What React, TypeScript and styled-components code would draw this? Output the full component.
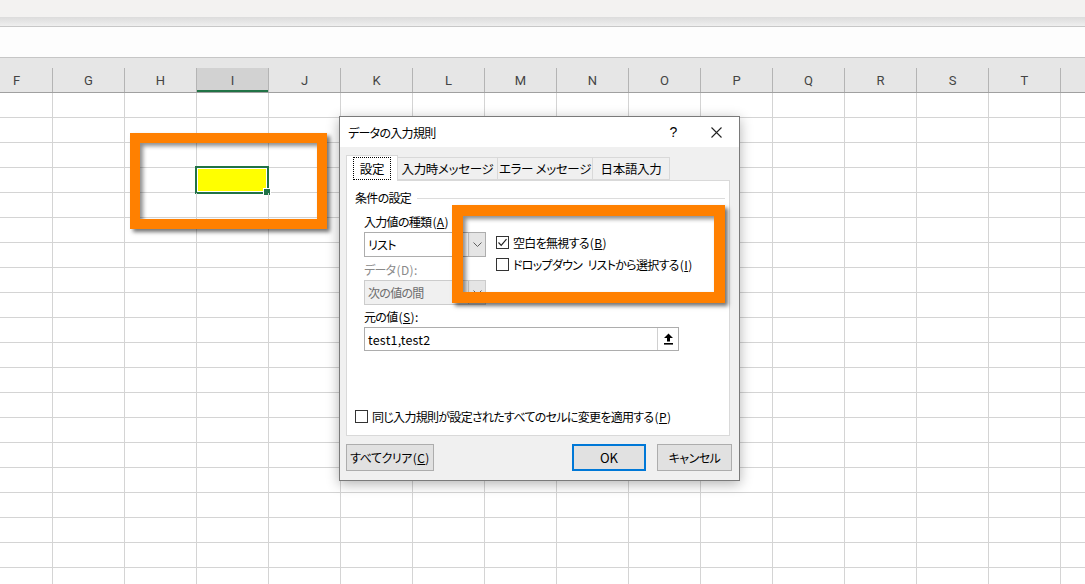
import styled, { createGlobalStyle } from "styled-components";

const GlobalStyle = createGlobalStyle`
  html, body {
    margin: 0;
    padding: 0;
    background: #ffffff;
  }
  * {
    box-sizing: border-box;
  }
`;

const COLUMNS = ["F", "G", "H", "I", "J", "K", "L", "M", "N", "O", "P", "Q", "R", "S", "T", "U"];
const ROW_COUNT = 20;

const Page = styled.div`
  position: relative;
  width: 1085px;
  height: 584px;
  overflow: hidden;
  background: #ffffff;
  font-family: "Noto Sans CJK JP", "Noto Sans", sans-serif;
`;

const TopBand = styled.div`
  height: 17px;
  background: #f3f2f1;
`;

const RibbonShadow = styled.div`
  height: 10px;
  background: linear-gradient(#dcdcdc, #efefef);
  border-bottom: 1px solid #c8c8c8;
`;

const FormulaBar = styled.div`
  height: 31px;
  background: #fdfdfd;
  border-bottom: 1px solid #c6c6c6;
`;

const HeaderRow = styled.div`
  display: flex;
  height: 35px;
  padding-top: 10px;
  margin-left: -19px;
  background: #e6e6e6;
  border-bottom: 1px solid #a0a0a0;
`;

const HeaderCell = styled.div<{ $active?: boolean }>`
  flex: 0 0 72px;
  height: 24px;
  display: flex;
  align-items: center;
  justify-content: center;
  border-right: 1px solid #b4b4b4;
  font-family: Roboto, "Liberation Sans", sans-serif;
  font-size: 13px;
  color: #444;
  background: ${(p) => (p.$active ? "#d2d2d2" : "transparent")};
  box-shadow: ${(p) => (p.$active ? "inset 0 -2px 0 #217346" : "none")};
`;

const SheetRow = styled.div`
  display: flex;
  height: 25px;
  margin-left: -19px;
  border-bottom: 1px solid #d4d4d4;
`;

const Cell = styled.div<{ $fill?: string }>`
  position: relative;
  flex: 0 0 72px;
  height: 24px;
  border-right: 1px solid #d4d4d4;
  background: ${(p) => p.$fill ?? "transparent"};
`;

const Selection = styled.div`
  position: absolute;
  left: -2px;
  top: -2px;
  right: -1px;
  bottom: -2px;
  border: 2px solid #217346;
  box-shadow: inset 0 0 0 1px #ffffff;

  &::after {
    content: "";
    position: absolute;
    right: -4px;
    bottom: -4px;
    width: 6px;
    height: 6px;
    background: #217346;
    border: 1px solid #ffffff;
  }
`;

const Highlight = styled.div<{ $x: number; $y: number; $w: number; $h: number; $t: number }>`
  position: absolute;
  left: ${(p) => p.$x}px;
  top: ${(p) => p.$y}px;
  width: ${(p) => p.$w}px;
  height: ${(p) => p.$h}px;
  border: ${(p) => p.$t}px solid #ff8000;
  box-shadow: 3px 3px 4px rgba(0, 0, 0, 0.55), inset 3px 3px 4px rgba(0, 0, 0, 0.45);
  z-index: 5;
`;

const Dialog = styled.div`
  position: absolute;
  left: 339px;
  top: 116px;
  width: 401px;
  height: 365px;
  display: flex;
  flex-direction: column;
  background: #f0f0f0;
  border: 1px solid #7a7a7a;
  box-shadow: 0 3px 12px rgba(0, 0, 0, 0.3);
  font-size: 12px;
  letter-spacing: -0.7px;
  color: #000;
  font-feature-settings: "palt";
  z-index: 3;
`;

const TitleBar = styled.div`
  display: flex;
  align-items: center;
  height: 30px;
  padding-left: 8px;
  background: #ffffff;
`;

const Title = styled.div`
  flex: 1;
`;

const TitleButton = styled.div<{ $w: number }>`
  width: ${(p) => p.$w}px;
  height: 30px;
  display: flex;
  align-items: center;
  justify-content: center;
  font-family: "Liberation Sans", sans-serif;
  font-size: 14px;
`;

const DialogBody = styled.div`
  flex: 1;
  display: flex;
  flex-direction: column;
  padding: 8px 9px 0 6px;
`;

const TabStrip = styled.div`
  display: flex;
  align-items: flex-end;
  height: 25px;
`;

const Tab = styled.div<{ $w: number; $active?: boolean }>`
  width: ${(p) => p.$w}px;
  height: ${(p) => (p.$active ? 26 : 23)}px;
  display: flex;
  align-items: center;
  justify-content: center;
  background: ${(p) => (p.$active ? "#ffffff" : "#f0f0f0")};
  border: 1px solid #d9d9d9;
  border-bottom: ${(p) => (p.$active ? "none" : "1px solid #d9d9d9")};
  border-left: ${(p) => (p.$active ? "1px solid #d9d9d9" : "none")};
  margin-bottom: ${(p) => (p.$active ? -1 : 0)}px;
  position: relative;
  z-index: ${(p) => (p.$active ? 1 : 0)};
  font-size: 12.5px;
  letter-spacing: -0.3px;
  white-space: pre;
`;

const FocusRing = styled.span`
  padding: 1px 6px;
  border: 1px dotted #000;
`;

const Panel = styled.div`
  height: 256px;
  display: flex;
  flex-direction: column;
  padding: 10px 4px 11px 8px;
  background: #ffffff;
  border: 1px solid #d9d9d9;
`;

const GroupHeader = styled.div`
  display: flex;
  align-items: center;
  gap: 6px;
  height: 14px;
  line-height: 14px;

  &::after {
    content: "";
    flex: 1;
    height: 1px;
    background: #dcdcdc;
  }
`;

const FormArea = styled.div`
  display: flex;
  margin: 9px 0 0 9px;
`;

const FieldColumn = styled.div`
  width: 122px;
  display: flex;
  flex-direction: column;
`;

const Label = styled.div<{ $disabled?: boolean; $gap: number }>`
  height: 16px;
  line-height: 16px;
  margin-top: ${(p) => p.$gap}px;
  color: ${(p) => (p.$disabled ? "#8a8a8a" : "#000")};
  white-space: nowrap;
`;

const KeyHint = styled.span`
  letter-spacing: 0.4px;
  margin-left: 1px;
`;

const Select = styled.div<{ $disabled?: boolean }>`
  display: flex;
  height: 25px;
  margin-top: 2px;
  border: 1px solid ${(p) => (p.$disabled ? "#cccccc" : "#adadad")};
  background: ${(p) => (p.$disabled ? "#f0f0f0" : "#ffffff")};
  color: ${(p) => (p.$disabled ? "#6d6d6d" : "#000")};
`;

const SelectValue = styled.div`
  flex: 1;
  display: flex;
  align-items: center;
  padding-left: 3px;
`;

const SelectArrow = styled.div`
  width: 17px;
  display: flex;
  align-items: center;
  justify-content: center;
  background: #e5e5e5;
  border-left: 1px solid #c4c4c4;
`;

const CheckColumn = styled.div`
  display: flex;
  flex-direction: column;
  gap: 6px;
  margin-left: 10px;
  padding-top: 20px;
`;

const CheckRow = styled.label`
  display: flex;
  align-items: center;
  gap: 4px;
  height: 16px;
  white-space: pre;
`;

const Box = styled.span`
  width: 13px;
  height: 13px;
  display: flex;
  align-items: center;
  justify-content: center;
  border: 1px solid #333333;
  background: #ffffff;
`;

const SourceBlock = styled.div`
  display: flex;
  flex-direction: column;
  margin-left: 9px;
`;

const SourceInput = styled.div`
  display: flex;
  width: 315px;
  height: 24px;
  margin-top: 2px;
  border: 1px solid #adadad;
`;

const SourceValue = styled.div`
  flex: 1;
  display: flex;
  align-items: center;
  padding-left: 3px;
  font-size: 12.5px;
  letter-spacing: 0.2px;
`;

const PickButton = styled.div`
  width: 21px;
  display: flex;
  align-items: center;
  justify-content: center;
  border-left: 1px solid #d0d0d0;
`;

const ApplyRow = styled(CheckRow)`
  margin-top: auto;
`;

const ButtonRow = styled.div`
  display: flex;
  align-items: center;
  gap: 11px;
  margin-top: 8px;
  margin-right: -2px;
`;

const Button = styled.div<{ $w: number; $primary?: boolean }>`
  width: ${(p) => p.$w}px;
  height: 27px;
  display: flex;
  align-items: center;
  justify-content: center;
  background: #e1e1e1;
  border: ${(p) => (p.$primary ? "2px solid #0078d7" : "1px solid #adadad")};
  font-size: ${(p) => (p.$primary ? "13px" : "12px")};
  letter-spacing: ${(p) => (p.$primary ? "0" : "-0.5px")};
`;

const Spacer = styled.div`
  flex: 1;
`;

const Key = ({ k, colon }: { k: string; colon?: boolean }) => (
  <KeyHint>
    (<u>{k}</u>){colon ? ":" : ""}
  </KeyHint>
);

const Check = () => (
  <svg width="11" height="11" viewBox="0 0 11 11">
    <polyline points="1.5,5.5 4.2,8.3 9.5,2.2" fill="none" stroke="#222" strokeWidth="1.2" />
  </svg>
);

const Chevron = () => (
  <svg width="9" height="5" viewBox="0 0 9 5">
    <polyline points="0.5,0.5 4.5,4.5 8.5,0.5" fill="none" stroke="#606060" strokeWidth="1" />
  </svg>
);

const CloseIcon = () => (
  <svg width="11" height="11" viewBox="0 0 11 11">
    <path d="M0.5 0.5 L10.5 10.5 M10.5 0.5 L0.5 10.5" stroke="#222" strokeWidth="1.1" />
  </svg>
);

const UploadIcon = () => (
  <svg width="11" height="12" viewBox="0 0 11 12">
    <path d="M5.5 0.5 L10 5 H7 V8.5 H4 V5 H1 Z" fill="#000" />
    <rect x="1" y="10" width="9" height="1.6" fill="#000" />
  </svg>
);

const App = () => {
  return (
    <Page>
      <GlobalStyle />
      <TopBand />
      <RibbonShadow />
      <FormulaBar />
      <HeaderRow>
        {COLUMNS.map((c) => (
          <HeaderCell key={c} $active={c === "I"}>
            {c === "U" ? "" : c}
          </HeaderCell>
        ))}
      </HeaderRow>
      {Array.from({ length: ROW_COUNT }).map((_, r) => (
        <SheetRow key={r}>
          {COLUMNS.map((c) => {
            const active = r === 3 && c === "I";
            return (
              <Cell key={c} $fill={active ? "#ffff00" : undefined}>
                {active && <Selection />}
              </Cell>
            );
          })}
        </SheetRow>
      ))}

      <Highlight $x={130} $y={133} $w={197} $h={96} $t={10} />

      <Dialog>
        <TitleBar>
          <Title>データの入力規則</Title>
          <TitleButton $w={40}>?</TitleButton>
          <TitleButton $w={46}>
            <CloseIcon />
          </TitleButton>
        </TitleBar>
        <DialogBody>
          <TabStrip>
            <Tab $w={52} $active>
              <FocusRing>設定</FocusRing>
            </Tab>
            <Tab $w={100}>入力時メッセージ</Tab>
            <Tab $w={95}>エラー メッセージ</Tab>
            <Tab $w={77}>日本語入力</Tab>
          </TabStrip>
          <Panel>
            <GroupHeader>条件の設定</GroupHeader>
            <FormArea>
              <FieldColumn>
                <Label $gap={0}>
                  入力値の種類<Key k="A" />
                </Label>
                <Select>
                  <SelectValue>リスト</SelectValue>
                  <SelectArrow>
                    <Chevron />
                  </SelectArrow>
                </Select>
                <Label $gap={5} $disabled>
                  データ<KeyHint>(D):</KeyHint>
                </Label>
                <Select $disabled>
                  <SelectValue>次の値の間</SelectValue>
                  <SelectArrow>
                    <Chevron />
                  </SelectArrow>
                </Select>
              </FieldColumn>
              <CheckColumn>
                <CheckRow>
                  <Box>
                    <Check />
                  </Box>
                  <span>
                    空白を無視する<Key k="B" />
                  </span>
                </CheckRow>
                <CheckRow>
                  <Box />
                  <span>
                    ドロップダウン{"\u2002"}リストから選択する<Key k="I" />
                  </span>
                </CheckRow>
              </CheckColumn>
            </FormArea>
            <SourceBlock>
              <Label $gap={4}>
                元の値<Key k="S" colon />
              </Label>
              <SourceInput>
                <SourceValue>test1,test2</SourceValue>
                <PickButton>
                  <UploadIcon />
                </PickButton>
              </SourceInput>
            </SourceBlock>
            <ApplyRow>
              <Box />
              <span>
                同じ入力規則が設定されたすべてのセルに変更を適用する<Key k="P" />
              </span>
            </ApplyRow>
          </Panel>
          <ButtonRow>
            <Button $w={88}>
              すべてクリア<Key k="C" />
            </Button>
            <Spacer />
            <Button $w={74} $primary>
              OK
            </Button>
            <Button $w={75}>キャンセル</Button>
          </ButtonRow>
        </DialogBody>
      </Dialog>

      <Highlight $x={452} $y={205} $w={273} $h={98} $t={11} />
    </Page>
  );
};

export default App;
